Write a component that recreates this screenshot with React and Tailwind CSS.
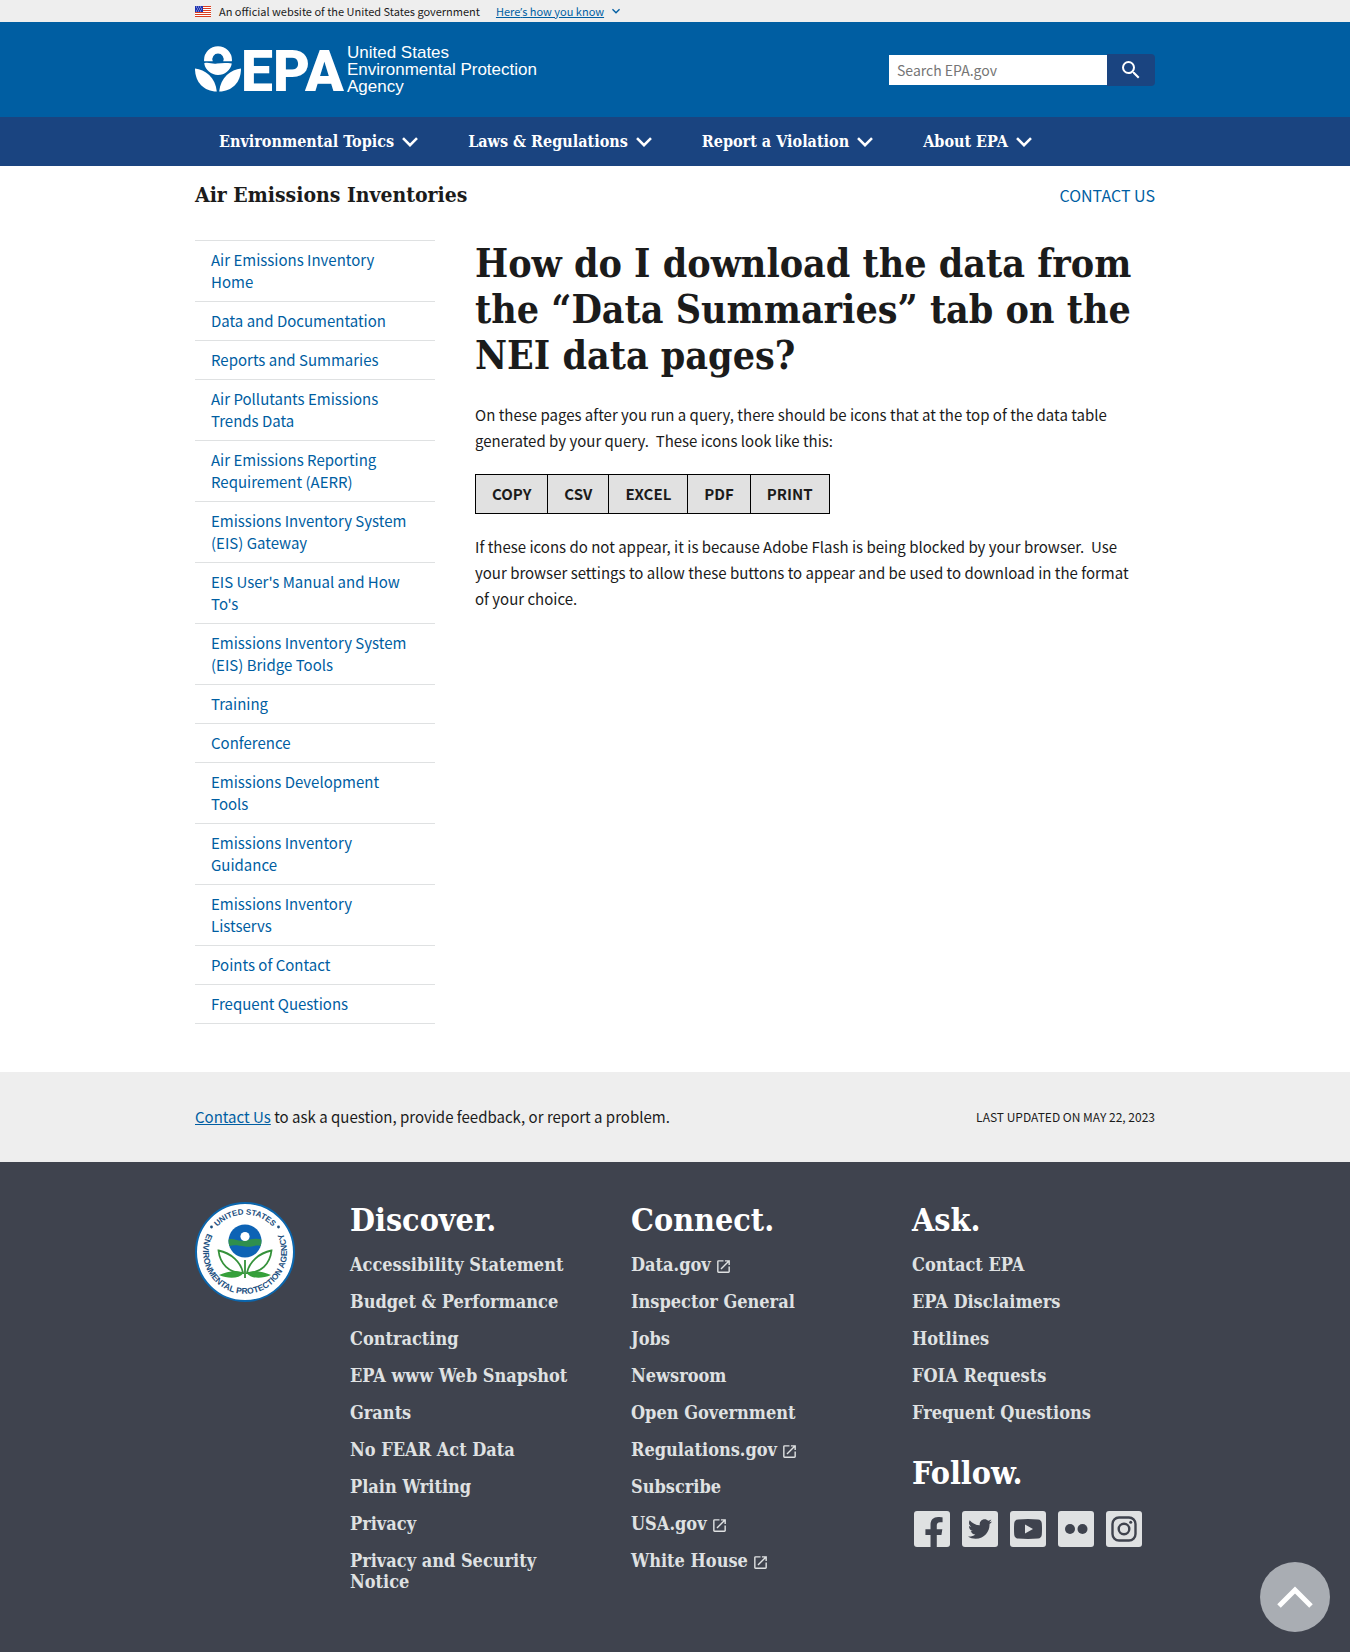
import React from "react";
import { FaFacebookF, FaTwitter } from "react-icons/fa";
import { MdSearch, MdOpenInNew, MdExpandMore } from "react-icons/md";

const SERIF = "font-['DejaVu_Serif_Condensed','DejaVu_Serif',serif] font-bold";
const WRAP = "mx-auto w-full max-w-[1024px] px-8";

const navItems = ["Environmental Topics", "Laws & Regulations", "Report a Violation", "About EPA"];

const sideItems = [
  "Air Emissions Inventory Home",
  "Data and Documentation",
  "Reports and Summaries",
  "Air Pollutants Emissions Trends Data",
  "Air Emissions Reporting Requirement (AERR)",
  "Emissions Inventory System (EIS) Gateway",
  "EIS User's Manual and How To's",
  "Emissions Inventory System (EIS) Bridge Tools",
  "Training",
  "Conference",
  "Emissions Development Tools",
  "Emissions Inventory Guidance",
  "Emissions Inventory Listservs",
  "Points of Contact",
  "Frequent Questions",
];

const discover = [
  "Accessibility Statement",
  "Budget & Performance",
  "Contracting",
  "EPA www Web Snapshot",
  "Grants",
  "No FEAR Act Data",
  "Plain Writing",
  "Privacy",
  "Privacy and Security Notice",
];
const connect = [
  "Data.gov",
  "Inspector General",
  "Jobs",
  "Newsroom",
  "Open Government",
  "Regulations.gov",
  "Subscribe",
  "USA.gov",
  "White House",
];
const external = ["Data.gov", "Regulations.gov", "USA.gov", "White House"];
const ask = ["Contact EPA", "EPA Disclaimers", "Hotlines", "FOIA Requests", "Frequent Questions"];

function Flag() {
  return (
    <svg viewBox="0 0 16 11" className="h-[11px] w-4" aria-hidden="true">
      <rect width="16" height="11" fill="#fff" />
      {[0, 2, 4, 6, 8, 10].map((y) => (
        <rect key={y} y={y} width="16" height="1" fill="#db3e1f" />
      ))}
      <rect width="8" height="6" fill="#1e33b1" />
      {[1, 3, 5].map((y) =>
        [1, 3, 5].map((x) => <rect key={x + "-" + y} x={x + (y === 3 ? 1 : 0)} y={y - 0.5} width="1" height="1" fill="#b8c0ee" />)
      )}
    </svg>
  );
}

function Chevron({ className }) {
  return (
    <svg viewBox="0 0 16 10" className={className} fill="none" stroke="currentColor" strokeWidth="2.6" aria-hidden="true">
      <path d="M1 1.2 8 8.2 15 1.2" />
    </svg>
  );
}

function Logo() {
  return (
    <svg viewBox="0 -14 350 80" className="h-20 w-[350px]" role="img" aria-label="United States Environmental Protection Agency">
      <g fill="#fff">
        <path d="M9 16.200A14 14 0 0 1 37 16.200L36.800 17.200H28.200A5.600 5.600 0 1 0 17.800 17.200H9.200Z" />
        <path d="M9.200 19.200C14 18 17 20.400 22 19.600S31 18.600 36.800 19.400A14 14 0 0 1 9.200 19.200Z" />
        <path d="M0 24.400C10 25.600 20.500 33 21.800 47.600C9 47 0 38.500 0 24.400Z" />
        <path d="M46 24.400C36 25.600 25.500 33 24.200 47.600C37 47 46 38.500 46 24.400Z" />
      </g>
      <text x="46" y="47" fill="#fff" fontSize="57" fontWeight="900" fontFamily="Roboto,sans-serif">EPA</text>
      <g fill="#fff" fontSize="17" fontFamily="'Liberation Sans',sans-serif">
        <text x="152" y="14">United States</text>
        <text x="152" y="31">Environmental Protection</text>
        <text x="152" y="48">Agency</text>
      </g>
    </svg>
  );
}

function Seal() {
  return (
    <svg viewBox="0 0 100 100" className="size-[100px]" role="img" aria-label="EPA seal">
      <defs>
        <path id="seal-top" d="M12.5 50A37.5 37.5 0 0 1 87.5 50" />
        <path id="seal-bottom" d="M18.3 22.3A42 42 0 1 0 81.7 22.3" />
      </defs>
      <circle cx="50" cy="50" r="49" fill="#fff" stroke="#0b66ad" strokeWidth="2" />
      <g fill="#1c4f80" fontWeight="700" fontFamily="'Liberation Sans',sans-serif" textAnchor="middle">
        <text fontSize="8"><textPath href="#seal-top" startOffset="50%">UNITED STATES</textPath></text>
        <text fontSize="8.5"><textPath href="#seal-bottom" startOffset="50%">ENVIRONMENTAL PROTECTION AGENCY</textPath></text>
      </g>
      <circle cx="16.5" cy="25" r="1.4" fill="#1c4f80" />
      <circle cx="83.5" cy="25" r="1.4" fill="#1c4f80" />
      <circle cx="50" cy="39" r="16.5" fill="#0d63b5" />
      <path d="M33.6 37.5C39 35.5 43 40 50 38.5S61 36 66.4 37.5A16.5 16.5 0 0 1 65.7 44C60 42.5 56 45.5 50 44.5S39 42.5 34.3 44A16.5 16.5 0 0 1 33.6 37.5Z" fill="#2f8f4e" />
      <circle cx="50" cy="34.5" r="4.6" fill="#fff" />
      <g fill="none" stroke="#35913a" strokeWidth="1.8">
        <path d="M50 58V76" />
        <path d="M48 71C46 60 36 51 23.5 48.5C25 62 34 71 48 71Z" />
        <path d="M52 71C54 60 64 51 76.5 48.5C75 62 66 71 52 71Z" />
      </g>
      <path d="M48.5 71C42 68 33 69 24 73C33 77 44 77 48.5 71ZM51.5 71C58 68 67 69 76 73C67 77 56 77 51.5 71Z" fill="#35a03a" />
    </svg>
  );
}

function SocialTile({ label, children }) {
  return (
    <a href="#" aria-label={label} className="flex size-9 items-center justify-center overflow-hidden rounded-[3px] bg-[#dfe1e2] text-[#3f434e]">
      {children}
    </a>
  );
}

function FooterColumn({ title, items }) {
  return (
    <div>
      <h2 className={`${SERIF} text-[32px] leading-9 text-white`}>{title}</h2>
      <ul className="mt-4 flex flex-col gap-4">
        {items.map((item) => (
          <li key={item} className={`${SERIF} text-[18px] leading-[21px] text-[#dfe1e2]`}>
            <a href="#" className="inline-flex items-center gap-1">
              {item}
              {external.includes(item) && <MdOpenInNew className="mt-1 size-[17px]" />}
            </a>
          </li>
        ))}
      </ul>
    </div>
  );
}

export default function App() {
  return (
    <div className="flex min-h-screen flex-col bg-white font-['Noto_Sans_CJK_SC',sans-serif] text-[15px] text-[#1b1b1b]">
      <div className="bg-[#eeeeee]">
        <div className={`${WRAP} flex h-[22px] items-center text-[11px] leading-4`}>
          <Flag />
          <span className="ml-2">An official website of the United States government</span>
          <button type="button" className="ml-4 flex items-center gap-1 text-[#005ea2]">
            <span className="underline">Here<span className="font-['Open_Sans',sans-serif]">’</span>s how you know</span>
            <MdExpandMore className="size-4" />
          </button>
        </div>
      </div>

      <header>
        <div className="bg-[#005ea2]">
          <div className={`${WRAP} flex h-[95px] items-center justify-between`}>
            <a href="#"><Logo /></a>
            <form className="flex items-center" onSubmit={(e) => e.preventDefault()}>
              <input type="search" aria-label="Search" placeholder="Search EPA.gov" className="h-[30px] w-[218px] bg-white px-2 text-[14px] placeholder:text-[#757575]" />
              <button type="submit" aria-label="Search" className="flex h-8 w-12 items-center justify-center rounded-r bg-[#1a4480] text-white">
                <MdSearch className="size-6" />
              </button>
            </form>
          </div>
        </div>
        <nav className="bg-[#1a4480]">
          <div className={`${WRAP} flex h-[49px] items-center gap-0.5`}>
            {navItems.map((item) => (
              <button key={item} type="button" className={`${SERIF} flex items-center gap-2 px-6 text-[16px] leading-5 text-white`}>
                {item}
                <Chevron className="h-[10px] w-4" />
              </button>
            ))}
          </div>
        </nav>
      </header>

      <main className={WRAP}>
        <div className="flex h-[58px] items-center justify-between">
          <h2 className={`${SERIF} text-[21px] leading-7`}>Air Emissions Inventories</h2>
          <a href="#" className="text-[16px] text-[#005ea2]">CONTACT US</a>
        </div>
        <div className="mt-4 flex items-start gap-10 pb-12">
          <nav aria-label="Section" className="w-60 shrink-0">
            <ul className="border-b border-[#dfe1e2]">
              {sideItems.map((item) => (
                <li key={item} className="border-t border-[#dfe1e2]">
                  <a href="#" className="block py-2 pr-6 pl-4 leading-[22px] text-[#005ea2]">{item}</a>
                </li>
              ))}
            </ul>
          </nav>
          <article className="min-w-0 flex-1">
            <h1 className={`${SERIF} text-[39px] leading-[46px]`}>
              How do I download the data from the “Data Summaries” tab on the NEI data pages?
            </h1>
            <p className="mt-6 pr-4 leading-[26px]">
              On these pages after you run a query, there should be icons that at the top of the data table generated by your query.&nbsp; These icons look like this:
            </p>
            <div className="mt-5 flex w-fit divide-x divide-black border border-black bg-[#e1e1e1]">
              {["COPY", "CSV", "EXCEL", "PDF", "PRINT"].map((b) => (
                <button key={b} type="button" className="px-4 py-2 font-bold leading-[22px]">{b}</button>
              ))}
            </div>
            <p className="mt-5 pr-4 leading-[26px]">
              If these icons do not appear, it is because Adobe Flash is being blocked by your browser.&nbsp; Use your browser settings to allow these buttons to appear and be used to download in the format of your choice.
            </p>
          </article>
        </div>
      </main>

      <div className="bg-[#eeeeee]">
        <div className={`${WRAP} flex h-[90px] items-center justify-between`}>
          <p><a href="#" className="text-[#005ea2] underline">Contact Us</a> to ask a question, provide feedback, or report a problem.</p>
          <p className="text-[12px]">LAST UPDATED ON MAY 22, 2023</p>
        </div>
      </div>

      <footer className="flex-1 bg-[#3f434e]">
        <div className={`${WRAP} flex pt-10 pb-14`}>
          <div className="w-[155px] shrink-0"><Seal /></div>
          <div className="grid flex-1 grid-cols-[225px_225px_1fr] gap-x-14">
            <FooterColumn title="Discover." items={discover} />
            <FooterColumn title="Connect." items={connect} />
            <div>
              <FooterColumn title="Ask." items={ask} />
              <h2 className={`${SERIF} mt-8 text-[32px] leading-9 text-white`}>Follow.</h2>
              <div className="mt-5 ml-[2px] flex gap-3">
                <SocialTile label="Facebook"><FaFacebookF className="mt-2 ml-1 size-8 shrink-0" /></SocialTile>
                <SocialTile label="Twitter"><FaTwitter className="size-6" /></SocialTile>
                <SocialTile label="YouTube">
                  <svg viewBox="0 0 28 20" className="h-5 w-7" fill="currentColor">
                    <path fillRule="evenodd" d="M4 .5Q14-.4 24 .5 27.5.8 27.8 4.5 28.2 10 27.8 15.5 27.5 19.2 24 19.5 14 20.4 4 19.5.5 19.2.2 15.5-.2 10 .2 4.5.5.8 4 .5ZM11 5.5V14.5L19 10Z" />
                  </svg>
                </SocialTile>
                <SocialTile label="Flickr">
                  <svg viewBox="0 0 24 12" className="h-3 w-6" fill="currentColor">
                    <circle cx="6" cy="6" r="5" /><circle cx="18.5" cy="6" r="5" />
                  </svg>
                </SocialTile>
                <SocialTile label="Instagram">
                  <svg viewBox="0 0 26 26" className="size-[26px]" fill="none" stroke="currentColor" strokeWidth="2.4">
                    <rect x="1.5" y="1.5" width="23" height="23" rx="6.5" />
                    <circle cx="13" cy="13" r="5.3" />
                    <circle cx="19.7" cy="6.3" r="1.5" fill="currentColor" stroke="none" />
                  </svg>
                </SocialTile>
              </div>
            </div>
          </div>
        </div>
      </footer>

      <a href="#" aria-label="Back to top" className="fixed right-5 bottom-5 flex size-[70px] items-center justify-center rounded-full bg-[#a9adb3] text-white">
        <svg viewBox="0 0 36 22" className="h-[22px] w-9" fill="none" stroke="currentColor" strokeWidth="5" aria-hidden="true">
          <path d="M2 20 18 4 34 20" />
        </svg>
      </a>
    </div>
  );
}
